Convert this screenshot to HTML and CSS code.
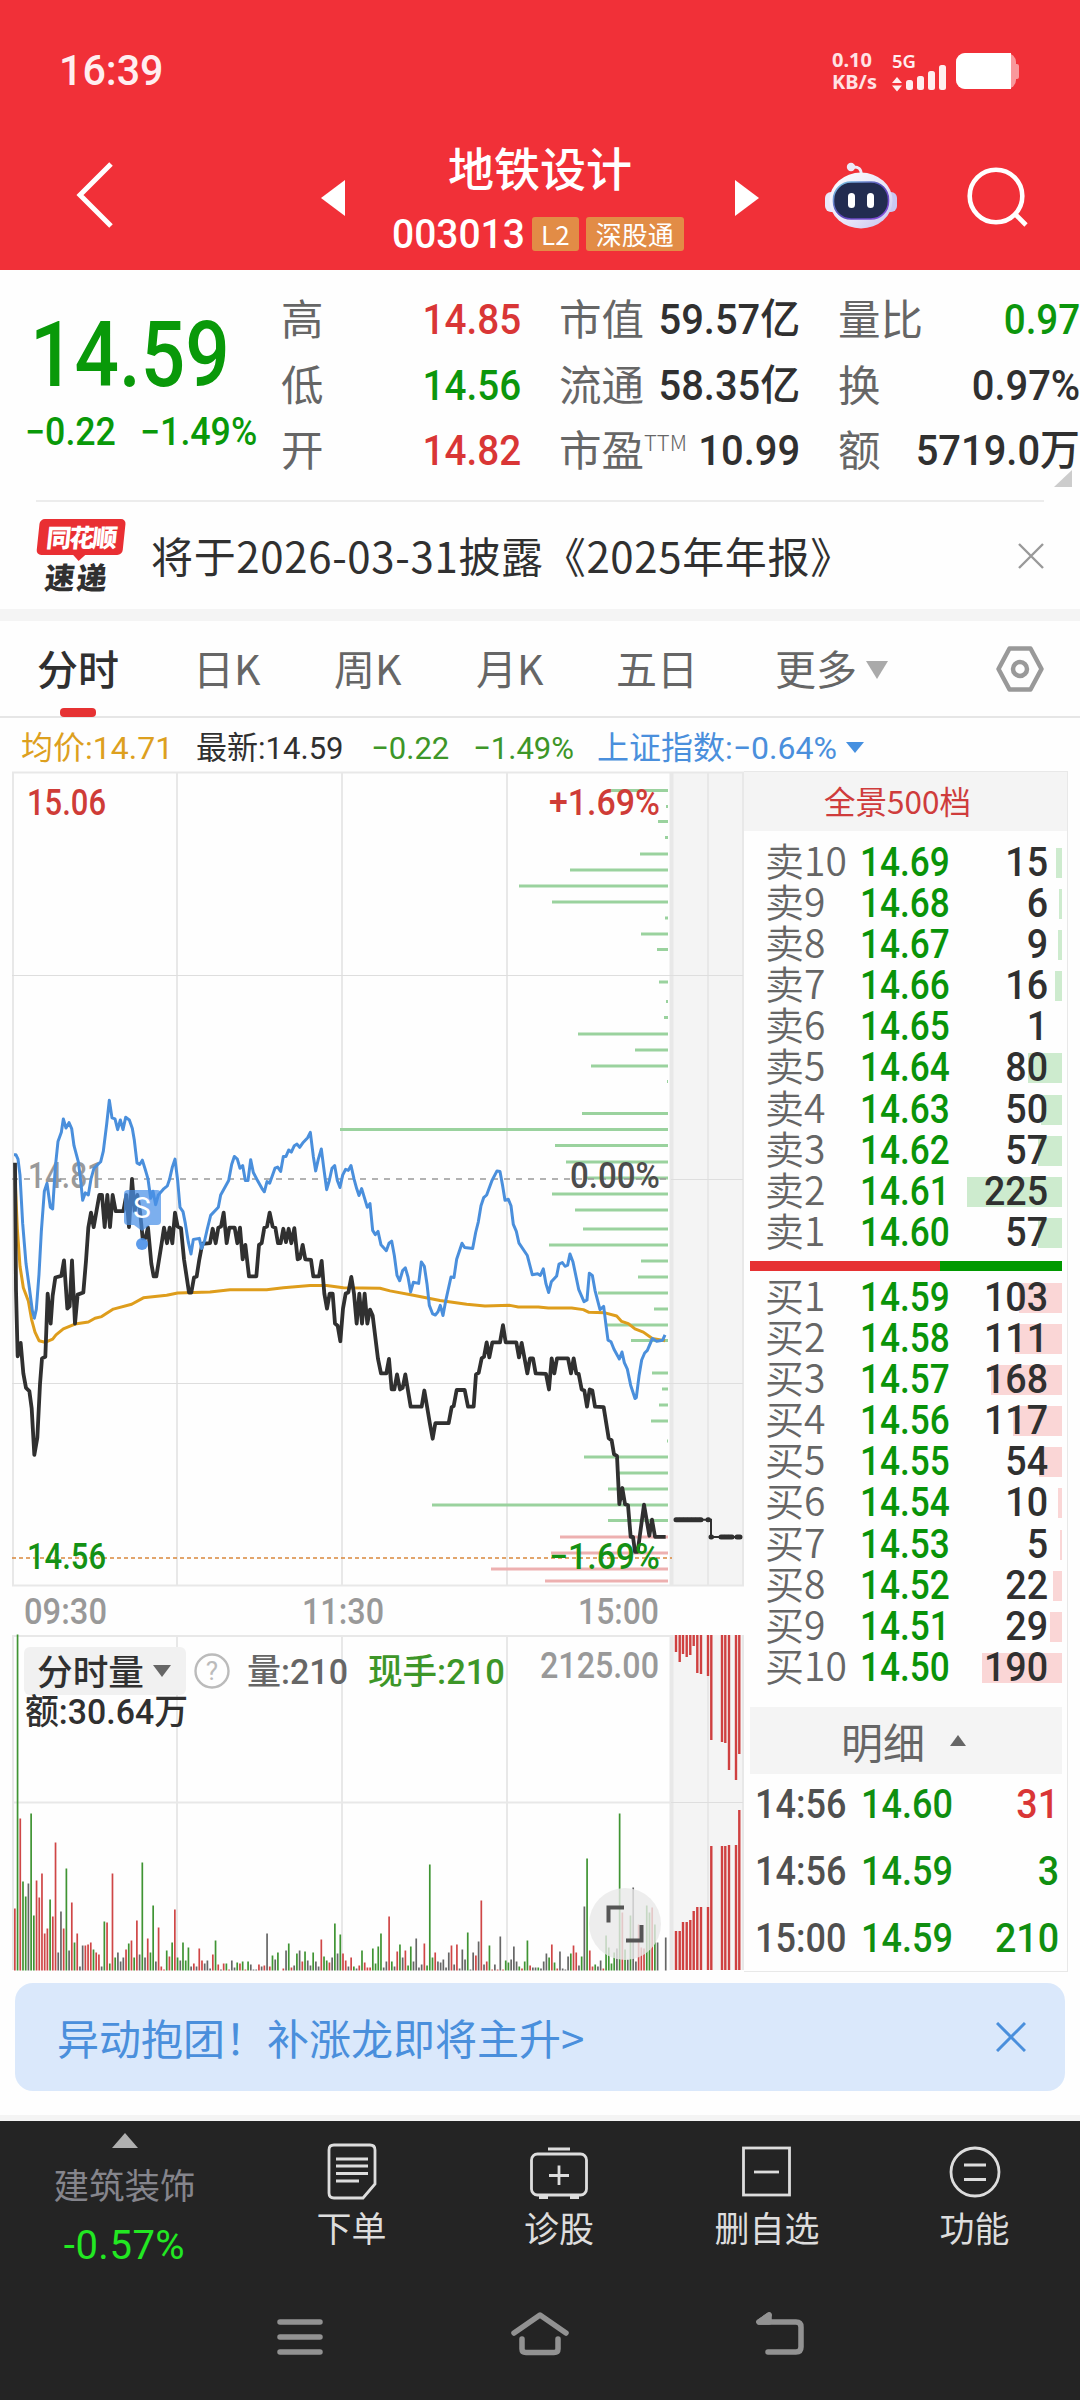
FILE: index.html
```html
<!DOCTYPE html>
<html lang="zh-CN">

<head>
  <meta charset="UTF-8">
  <title>地铁设计 003013</title>
  <meta name="viewport" content="width=device-width, initial-scale=1.0" />
  <link rel="stylesheet" href="styles.css">
</head>

<body>
  <header class="header">
    <div class="status">
      <span class="clock">16:39</span>
      <div class="status-right">
        <div class="speed"><span>0.10</span><span>KB/s</span></div>
        <svg class="signal" width="56" height="40" viewBox="0 0 56 40" fill="#ffeef0">
          <text x="0" y="17" class="net" textLength="24" lengthAdjust="spacingAndGlyphs">5G</text>
          <path d="M0 32l5-6 5 6zM0 34.500l5 6 5-6z" />
          <rect x="14" y="29" width="7" height="10" rx="2.500" />
          <rect x="25" y="25" width="7" height="14" rx="2.500" />
          <rect x="36" y="20" width="7" height="19" rx="2.500" />
          <rect x="47" y="14" width="7" height="25" rx="2.500" />
        </svg>
        <svg class="battery" width="63" height="36" viewBox="0 0 63 36">
          <rect x="0" y="0" width="60" height="36" rx="9" fill="#f9989c" />
          <rect x="58" y="11" width="5" height="15" rx="2" fill="#f9989c" />
          <path d="M9 0H55V36H9a9 9 0 0 1-9-9V9a9 9 0 0 1 9-9z" fill="#fff" />
        </svg>
      </div>
    </div>

    <div class="title-bar">
      <svg class="back" width="42" height="70" viewBox="0 0 42 70">
        <path d="M38 4L7 35L38 66" fill="none" stroke="#fff" stroke-width="5" />
      </svg>
      <svg class="prev" width="24" height="36" viewBox="0 0 24 36"><path d="M24 0V36L0 18z" fill="#fff" /></svg>
      <div class="stock">
        <h1>地铁设计</h1>
        <div class="stock-code">
          <span class="code">003013</span>
          <span class="badge">L2</span>
          <span class="badge wide">深股通</span>
        </div>
      </div>
      <svg class="next" width="24" height="36" viewBox="0 0 24 36"><path d="M0 0V36L24 18z" fill="#fff" /></svg>
      <svg class="robot" width="72" height="68" viewBox="0 0 72 68">
        <defs>
          <linearGradient id="shell" x1="0" y1="0" x2="1" y2="1">
            <stop offset="0" stop-color="#ffffff" />
            <stop offset="0.600" stop-color="#e6e4f8" />
            <stop offset="1" stop-color="#c3c0ee" />
          </linearGradient>
          <linearGradient id="rim" x1="0" y1="0" x2="1" y2="1">
            <stop offset="0" stop-color="#7fd4e8" />
            <stop offset="0.500" stop-color="#5a48b8" />
            <stop offset="1" stop-color="#8b4fe0" />
          </linearGradient>
        </defs>
        <path d="M27 5Q37 4 36 13" fill="none" stroke="#eeeafa" stroke-width="3" />
        <circle cx="26" cy="5" r="4.200" fill="#ece9f8" />
        <rect x="0" y="30" width="14" height="20" rx="6" fill="#eae8fa" />
        <rect x="58" y="30" width="14" height="20" rx="6" fill="#c9c7f2" />
        <ellipse cx="36" cy="38.500" rx="31.500" ry="28" fill="url(#shell)" />
        <rect x="8.500" y="20" width="55" height="37" rx="17.500" fill="#222c50" stroke="url(#rim)" stroke-width="1.600" />
        <rect x="23" y="31" width="7" height="15" rx="3.500" fill="#fff" />
        <rect x="42" y="31" width="7" height="15" rx="3.500" fill="#fff" />
      </svg>
      <svg class="search" width="62" height="62" viewBox="0 0 62 62" fill="none" stroke="#fff" stroke-width="4.600">
        <circle cx="29" cy="30" r="26.300" />
        <path d="M48 48L59 59" />
      </svg>
    </div>
  </header>

  <section class="quote">
    <div class="price">
      <div class="last"><span>14.59</span></div>
      <div class="change"><span>−0.22</span><span>−1.49%</span></div>
    </div>
    <dl class="stats">
      <dt>高</dt><dd class="up">14.85</dd>
      <dt>市值</dt><dd>59.57亿</dd>
      <dt>量比</dt><dd class="down">0.97</dd>
      <dt>低</dt><dd class="down">14.56</dd>
      <dt>流通</dt><dd>58.35亿</dd>
      <dt>换</dt><dd>0.97%</dd>
      <dt>开</dt><dd class="up">14.82</dd>
      <dt>市盈<sup>TTM</sup></dt><dd>10.99</dd>
      <dt>额</dt><dd>5719.0万</dd>
    </dl>
    <div class="corner"></div>
  </section>

  <section class="news">
    <div class="logo">
      <span class="logo-top">同花顺</span>
      <span class="logo-bottom">速递</span>
    </div>
    <p>将于2026-03-31披露《2025年年报》</p>
    <svg width="26" height="26" viewBox="0 0 26 26"><path d="M1 1L25 25M25 1L1 25" stroke="#999" stroke-width="2.400" /></svg>
  </section>

  <nav class="tabs">
    <a class="active">分时</a>
    <a>日K</a>
    <a>周K</a>
    <a>月K</a>
    <a>五日</a>
    <a>更多<i class="caret"></i></a>
    <svg width="50" height="48" viewBox="0 0 50 48" fill="none" stroke="#999" stroke-width="4.500">
      <path d="M14.500 3.500H35.500L46.500 24L35.500 44.500H14.500L3.500 24z" stroke-linejoin="round" />
      <circle cx="25" cy="24" r="7" />
    </svg>
  </nav>

  <div class="summary">
    <span class="avg">均价:14.71</span>
    <span class="now">最新:14.59</span>
    <span class="fall">−0.22</span>
    <span class="fall">−1.49%</span>
    <span class="index">上证指数:−0.64%<i class="caret"></i></span>
  </div>

  <main class="board">
    <div class="charts">
      <svg class="chart" width="732" height="1202" viewBox="12 770 732 1202">
        <!-- call auction strip -->
        <rect x="671" y="772" width="72" height="814" fill="#f4f4f4" />
        <rect x="671" y="1635" width="72" height="335" fill="#f4f4f4" />

        <!-- grid -->
        <g stroke="#e8e8e8" stroke-width="2" fill="none">
          <path d="M12 772.500H744M12 1585.500H744M12 1636H671M12 1802.500H671" />
          <path d="M13 772V1586M177 772V1586M342 772V1586M507 772V1586M708 772V1586M743 772V1586" />
          <path d="M13 1635V1970M177 1635V1970M342 1635V1970M507 1635V1970M708 1635V1970M743 1635V1970" />
          <path d="M671.500 772V1586M671.500 1635V1970" stroke-width="4" />
          <path d="M12 975.500H743M12 1383.500H743M671 1179.500H743M671 1802.500H743" stroke-width="1" stroke="#dedede" />
        </g>

        <!-- orders by price level -->
        <path class="asks" d="M608 790.500H668M666 806.500H668M658 821.500H668M665 837.500H668M640 854H668M570 870H668M519 886H668M552 902H668M665 918H668M641 934H668M657 949.500H668M659 982H668M666 1001.500H668M664 1017.500H668M578 1034H668M635 1050H668M591 1066H668M667 1081.500H668M582 1113.500H668M340 1129.500H668M555 1145.500H668M566 1162H668M585 1178H668M552 1194H668M575 1210H668M583 1229H668M549 1245H668M641 1261H668M638 1277H668M598 1293H668M654 1309H668M607 1325H668M631 1340.500H668M652 1373H668M662 1389H668M659 1405H668M651 1421H668M667 1441H668M584 1457H668M619 1473H668M608 1489H668M432 1505H668M608 1520.500H668" />
        <path class="bids" d="M560 1537H668M551 1553H668M491 1569H668M545 1581H668" />

        <path d="M12 1179H668" stroke="#999" stroke-width="1.600" stroke-dasharray="6 6" />
        <path d="M12 1558H672" stroke="#d9883c" stroke-width="1.600" stroke-dasharray="4 3" />

        <text class="axis" x="28" y="1188" fill="#999" textLength="76" lengthAdjust="spacingAndGlyphs">14.81</text>

        <g class="lines" transform="translate(0 760) scale(0.33333 0.53571)">
          <polyline stroke="#de9d1c" points="46,790 52,875 60,945 70,985 85,1010 95,1045 105,1068 117,1084 135,1087 158,1081 168,1073 190,1062 225,1053 265,1049 285,1042 305,1039 340,1025 395,1016 430,1004 500,999 533,995 630,993 690,989 800,989 850,985 930,981 980,981 1030,985 1140,986 1170,991 1240,999 1320,1009 1400,1016 1455,1019 1530,1018 1555,1021 1615,1021 1645,1023 1715,1023 1750,1026 1767,1031 1815,1032 1850,1038 1865,1048 1885,1052 1905,1062 1930,1068 1957,1080 1995,1084" />
          <polyline class="last-line" stroke="#303030" points="45,752 48,990 53,1113 62,1088 70,1145 78,1172 88,1178 95,1210 103,1297 112,1265 120,1165 126,1117 136,1114 143,996 152,1052 158,1000 166,966 184,963 192,934 202,1024 209,1020 216,934 225,1052 233,998 250,994 258,935 265,873 273,845 281,872 298,812 306,812 314,872 322,812 330,872 338,812 347,842 370,842 379,812 387,872 396,782 404,842 412,812 420,842 428,893 436,893 444,873 454,940 461,964 469,964 485,902 492,873 501,902 509,873 517,902 525,845 533,871 543,874 552,932 567,994 574,994 582,966 590,964 598,932 607,903 630,902 638,875 647,902 655,873 663,871 671,845 680,902 688,873 704,873 712,902 720,873 728,932 736,905 747,964 769,964 777,905 785,902 793,873 801,871 809,845 818,871 826,873 834,902 842,902 850,875 858,900 866,875 874,902 883,874 893,932 900,930 908,905 916,932 933,933 940,964 957,964 965,935 973,996 981,1024 989,996 998,996 1005,1052 1013,1056 1021,1085 1029,1024 1037,996 1045,994 1054,965 1062,996 1070,1052 1078,996 1086,1052 1094,996 1102,1052 1110,1026 1118,1037 1134,1118 1143,1145 1159,1145 1167,1118 1175,1175 1183,1175 1191,1147 1200,1175 1208,1172 1216,1147 1232,1207 1265,1207 1273,1177 1282,1210 1290,1240 1298,1267 1306,1238 1346,1238 1355,1208 1361,1206 1370,1176 1394,1176 1404,1207 1421,1207 1428,1147 1436,1144 1445,1117 1452,1114 1460,1087 1468,1115 1477,1087 1500,1087 1509,1055 1517,1087 1549,1087 1557,1115 1565,1088 1582,1145 1590,1117 1599,1117 1607,1145 1638,1146 1647,1175 1655,1117 1663,1145 1671,1117 1704,1117 1713,1145 1721,1117 1729,1145 1736,1146 1745,1175 1753,1177 1761,1207 1769,1175 1777,1177 1785,1207 1811,1208 1826,1266 1835,1270 1842,1296 1851,1299 1858,1389 1867,1359 1875,1389 1884,1391 1892,1450 1899,1450 1905,1478 1913,1478 1932,1390 1948,1448 1956,1418 1965,1450 1997,1450" />
          <polyline stroke="#4a8fdc" points="42,737 48,737 54,745 60,775 68,865 78,940 88,985 97,1028 103,1042 109,1025 117,960 124,880 133,805 141,790 151,835 158,838 166,760 174,712 184,695 190,670 198,687 207,677 215,688 222,720 235,750 242,785 248,822 256,808 265,812 273,782 282,762 302,750 310,730 320,680 328,635 336,668 345,670 353,690 361,672 369,690 377,667 388,672 397,688 403,710 411,752 419,755 427,747 436,765 444,782 452,818 459,805 467,830 475,812 492,800 502,795 509,782 517,760 525,745 533,785 540,835 549,843 556,865 565,900 573,922 580,895 598,893 605,912 614,897 622,875 632,850 655,835 662,812 686,785 695,755 703,740 712,745 720,762 728,757 736,785 744,785 752,746 760,770 770,782 786,800 793,806 801,787 809,790 825,762 833,760 842,768 850,740 858,740 866,728 874,732 883,720 891,717 899,723 908,715 923,705 931,695 940,740 947,767 955,745 964,726 972,765 980,802 988,785 996,762 1004,757 1012,785 1020,798 1028,775 1037,764 1045,766 1053,757 1062,782 1070,800 1077,813 1085,800 1102,835 1110,828 1118,878 1126,886 1134,880 1143,905 1159,916 1167,902 1175,898 1183,925 1191,962 1199,972 1208,953 1216,948 1224,965 1232,993 1240,975 1256,977 1264,937 1273,945 1281,978 1288,1018 1298,1034 1306,1036 1314,1030 1321,1018 1329,1037 1337,1010 1353,965 1362,966 1370,932 1386,902 1394,910 1418,912 1427,882 1435,862 1443,832 1451,817 1460,812 1476,785 1491,767 1500,768 1508,795 1515,822 1525,820 1533,832 1540,867 1549,880 1557,902 1582,925 1597,961 1613,959 1621,962 1630,950 1638,978 1646,994 1654,974 1670,963 1677,941 1687,938 1695,945 1703,943 1710,922 1719,937 1736,988 1752,1011 1761,1008 1768,958 1777,962 1785,990 1800,1026 1811,1020 1818,1055 1824,1083 1833,1086 1842,1100 1858,1118 1866,1105 1873,1125 1882,1137 1892,1167 1905,1192 1909,1190 1917,1150 1925,1120 1934,1107 1942,1102 1957,1080 1970,1085 1988,1083 1995,1073" />
        </g>

        <!-- auction price -->
        <path d="M674 1519.800H711V1537H742" fill="none" stroke="#303030" stroke-width="2" />
        <path d="M676 1519.800H701M708 1519.800H708.500M711 1537H711.500M721 1537H733M737 1537H741" stroke="#303030" stroke-width="5" stroke-linecap="round" stroke-dasharray="3 1" />

        <!-- sell marker -->
        <rect x="124" y="1190" width="37" height="35" rx="4" fill="#4a90e8" fill-opacity="0.720" />
        <path d="M134 1225H150L142 1231z" fill="#4a90e8" fill-opacity="0.720" />
        <circle cx="142" cy="1244" r="6" fill="#4a90e8" fill-opacity="0.900" />
        <text class="mark" x="142" y="1218">S</text>

        <text class="axis" x="27" y="815" fill="#cf3c37" textLength="79" lengthAdjust="spacingAndGlyphs">15.06</text>
        <text class="axis" x="549" y="815" fill="#cf3c37" textLength="111" lengthAdjust="spacingAndGlyphs">+1.69%</text>
        <text class="axis" x="570" y="1188" fill="#4c4c4c" textLength="90" lengthAdjust="spacingAndGlyphs">0.00%</text>
        <text class="axis" x="27" y="1569" fill="#149114" textLength="79" lengthAdjust="spacingAndGlyphs">14.56</text>
        <text class="axis" x="549" y="1569" fill="#149114" textLength="111" lengthAdjust="spacingAndGlyphs">−1.69%</text>
        <text class="axis time" x="24" y="1624" textLength="83" lengthAdjust="spacingAndGlyphs">09:30</text>
        <text class="axis time" x="302" y="1624" textLength="82" lengthAdjust="spacingAndGlyphs">11:30</text>
        <text class="axis time" x="578" y="1624" textLength="81" lengthAdjust="spacingAndGlyphs">15:00</text>

        <g id="volume"></g>
        <g id="auction"></g>

        <!-- volume legend -->
        <rect x="24" y="1647" width="162" height="48" rx="6" fill="#f1f1f1" />
        <text class="cn" x="37" y="1685" fill="#303030" textLength="107" lengthAdjust="spacingAndGlyphs">分时量</text>
        <path d="M153 1665H171L162 1677z" fill="#666" />
        <circle cx="212" cy="1671" r="16.500" fill="none" stroke="#bbb" stroke-width="2.400" />
        <text class="help" x="212" y="1680">?</text>
        <text class="cn" x="247" y="1684" fill="#666" textLength="101" lengthAdjust="spacingAndGlyphs">量:210</text>
        <text class="cn" x="368" y="1684" fill="#3d9628" textLength="137" lengthAdjust="spacingAndGlyphs">现手:210</text>
        <text class="axis time" x="540" y="1678" textLength="119" lengthAdjust="spacingAndGlyphs">2125.00</text>
        <text class="cn" x="25" y="1724" fill="#303030" textLength="163" lengthAdjust="spacingAndGlyphs">额:30.64万</text>

        <!-- full screen button -->
        <circle cx="625" cy="1924" r="36" fill="#e9e9e9" fill-opacity="0.800" />
        <path d="M608.500 1922.500V1907.500H624M626 1940.500H641.500V1925" fill="none" stroke="#555" stroke-width="4" />
      </svg>
    </div>

    <aside class="book">
      <div class="book-head">全景500档</div>
      <div class="levels" id="asks"></div>
      <div class="ratio"><i></i></div>
      <div class="levels" id="bids"></div>
      <div class="ticks-head">明细<i></i></div>
      <div class="ticks">
        <div class="tick"><span>14:56</span><b>14.60</b><em class="up">31</em></div>
        <div class="tick"><span>14:56</span><b>14.59</b><em>3</em></div>
        <div class="tick"><span>15:00</span><b>14.59</b><em>210</em></div>
      </div>
    </aside>
  </main>

  <div class="promo">
    <span>异动抱团！补涨龙即将主升&gt;</span>
    <svg width="30" height="30" viewBox="0 0 30 30"><path d="M1 1L29 29M29 1L1 29" stroke="#4a8fdc" stroke-width="3" /></svg>
  </div>

  <footer class="footer">
    <div class="actions">
      <div class="sector">
        <i></i>
        <span>建筑装饰</span>
        <b>-0.57%</b>
      </div>
      <div class="action">
        <svg width="60" height="60" viewBox="0 0 60 60">
          <path d="M12 4H48Q53 4 53 9V43L41 57H12Q7 57 7 52V9Q7 4 12 4z" />
          <path d="M14 18H46M14 25H46M14 32.500H46M14 40H37" />
        </svg>
        <span>下单</span>
      </div>
      <div class="action">
        <svg width="60" height="60" viewBox="0 0 60 60">
          <rect x="2.500" y="13" width="55" height="41" rx="6" />
          <path d="M19 8H41M10 56.500H19M41 56.500H50M30 24.500V44M20 34.500H40" />
        </svg>
        <span>诊股</span>
      </div>
      <div class="action">
        <svg width="60" height="60" viewBox="0 0 60 60">
          <rect x="6.500" y="7" width="46" height="47" />
          <path d="M17 31H42" />
        </svg>
        <span>删自选</span>
      </div>
      <div class="action">
        <svg width="60" height="60" viewBox="0 0 60 60">
          <circle cx="30" cy="31" r="24" />
          <path d="M19 24H41M19 38.500H41" />
        </svg>
        <span>功能</span>
      </div>
    </div>
    <div class="system">
      <svg width="60" height="48" viewBox="0 0 60 48"><path d="M10 12H50M10 27H50M10 42H50" /></svg>
      <svg width="60" height="48" viewBox="0 0 60 48"><path d="M4 23L30 5L56 23M12 29V39Q12 42.500 16 42.500H44Q48 42.500 48 39V29" /></svg>
      <svg width="60" height="48" viewBox="0 0 60 48"><path d="M19 5L9 12H46Q51 12 51 17V37Q51 42 46 42H18" /><path d="M19 5L9 12H19z" fill="#929292" /></svg>
    </div>
  </footer>

  <script>
    const asks = [15, 6, 9, 16, 1, 80, 50, 57, 225, 57];
    const bids = [103, 111, 168, 117, 54, 10, 5, 22, 29, 190];

    // r = up, g = down, k = flat, number = bar height
    const minutes = `r62 g336 r152 g89 g74 k87 g157 g55 r90 r73 r97 r37 r42 g71 r54 r128 k18 k59 r42 g102
      k20 r68 g28 r37 k4 k25 r25 r26 r28 g21 r18 r16 k4 g49 r48 g7 r97 g13 k18 k9
      k13 r21 g27 r30 g13 r50 k16 g108 k13 r32 g18 g65 k9 r43 r4 r1 g20 r14 g28 r61
      g13 k10 g28 g10 g23 k4 r7 k4 r22 r10 k7 k10 k2 r16 g30 r6 k1 r7 g7 r1
      k10 k3 g8 r7 g9 r1 g9 k6 k1 k1 r6 k4 r5 k37 r4 g15 k11 g18 k0 r2
      k20 g27 r3 k5 g17 k20 r9 g19 k10 k5 g18 k9 k4 r31 g14 g10 r8 k13 g47 k17
      g36 r17 r10 k4 r13 g4 k2 r5 g20 r8 r3 r3 g22 g7 g24 g37 k3 k9 r54 g9
      k4 r19 g26 k13 r20 g5 g24 k9 k32 k3 k6 r27 g5 g106 g13 r18 k9 k8 k11 k3
      k18 r25 k6 r26 k2 k21 k11 g38 k1 k18 r15 k29 r70 k6 r9 g25 r1 k6 r1 k34
      r1 g10 g8 k11 k24 k9 g4 r2 g9 g30 r5 k3 k3 g3 k2 k9 k17 g13 r26 g8
      r2 k19 k2 k1 k14 g17 r25 r18 k5 g14 k64 g112 r20 r4 g6 k4 k10 r2 g35 g23
      g7 g18 k22 g157 r58 g21 k11 g55 k83 k9 r46 r23 r22 g65 g58 r63 g46 k28 k0 k0 k33`;

    // x, unmatched volume (from top), matched volume (from bottom)
    const auction = [
      [676, 17, 39], [679.7, 27, 39], [683, 19, 48], [686.7, 22, 48], [690.3, 20, 50],
      [693.7, 11, 59], [697.3, 38, 63], [701, 39, 63], [708, 41, 63], [711.3, 105, 124],
      [722, 107, 124], [725.3, 108, 124], [729, 135, 125], [736, 145, 125], [739.3, 119, 160]
    ];

    function showLevels(id, label, list, firstPrice) {
      const container = document.getElementById(id);
      list.forEach((qty, i) => {
        const level = label === '卖' ? 10 - i : i + 1;
        const price = ((firstPrice - i) / 100).toFixed(2);
        const row = document.createElement('div');
        row.className = 'level';
        row.innerHTML = `
          <span>${label}${level}</span>
          <b>${price}</b>
          <em>${qty}</em>
          <i style="width: ${Math.round(qty * 0.42)}px"></i>
        `;
        container.appendChild(row);
      });
    }

    function drawVolume() {
      const colors = { r: '#cf4646', g: '#3f9433', k: '#666666' };
      let bars = '';
      minutes.trim().split(/\s+/).forEach((item, i) => {
        const h = Number(item.slice(1));
        const x = (14 + i * 2.712).toFixed(2);
        bars += `<rect x="${x}" y="${1970.5 - h}" width="1.7" height="${h}" fill="${colors[item[0]]}" />`;
      });
      document.getElementById('volume').innerHTML = bars;

      bars = '';
      auction.forEach(([x, top, bottom]) => {
        bars += `<rect x="${x - 1.2}" y="1635" width="2.4" height="${top}" />`;
        bars += `<rect x="${x - 1.2}" y="${1970 - bottom}" width="2.4" height="${bottom}" />`;
      });
      document.getElementById('auction').innerHTML = bars;
    }

    showLevels('asks', '卖', asks, 1469);
    showLevels('bids', '买', bids, 1459);
    drawVolume();
  </script>
</body>

</html>
```
FILE: styles.css
```css
* {
  box-sizing: border-box;
}

body {
  margin: 0;
  width: 1080px;
  height: 2400px;
  overflow: hidden;
  background: #fefefe;
  color: #303030;
  font-family: Roboto, "Noto Sans CJK SC", sans-serif;
}

svg {
  display: block;
}

b,
em,
i {
  font-style: normal;
  font-weight: 500;
}

.up {
  color: #d93636;
}

.down {
  color: #0c960c;
}

/* header */
.header {
  height: 270px;
  background: #f13038;
  color: #fff;
}

.status {
  display: flex;
  justify-content: space-between;
  height: 141px;
  padding: 0 61px 0 59px;
}

.clock {
  margin-top: 46px;
  font-size: 42px;
  line-height: 50px;
  font-weight: 500;
  color: #ffeef0;
  transform: scaleX(0.98);
  transform-origin: left;
}

.status-right {
  display: flex;
  padding-top: 51px;
}

.speed {
  display: flex;
  flex-direction: column;
  width: 60px;
  font: 700 20px/22px "Noto Sans", sans-serif;
  color: #ffe2e4;
  margin-top: -2px;
}

.net {
  font: 600 18px "Noto Sans", sans-serif;
}

.signal {
  overflow: visible;
}

.battery {
  margin: 2px 0 0 8px;
}

.title-bar {
  display: grid;
  grid-template-columns: 248px 49px 316px 90px 116px 70px;
  align-items: start;
  padding-left: 73px;
}

.back {
  margin-top: 19px;
}

.prev,
.next {
  margin-top: 39px;
}

.stock {
  text-align: center;
}

h1 {
  margin: 0 0 0 24px;
  font-size: 46px;
  line-height: 58px;
  font-weight: 500;
}

.stock-code {
  display: flex;
  align-items: center;
  height: 36px;
  margin: 17px 0 0 22px;
}

.code {
  width: 144px;
  text-align: left;
  font-size: 41px;
  font-weight: 500;
  line-height: 36px;
  transform: scaleX(0.95);
  transform-origin: left;
}

.badge {
  flex: none;
  width: 47px;
  height: 34px;
  margin-right: 7px;
  border-radius: 3px;
  background: #e28c46;
  font: 400 26px/33px "Noto Sans CJK SC", sans-serif;
}

.badge.wide {
  width: 98px;
}

.next {
  margin-left: 49px;
}

.robot {
  margin: 21px 0 0 49px;
}

.search {
  margin: 25px 0 0 75px;
}

.title-bar .next,
.title-bar .robot,
.title-bar .search {
  justify-self: start;
}

/* quote */
.quote {
  position: relative;
  display: flex;
  height: 230px;
}

.price {
  width: 281px;
  color: #099909;
}

.last {
  height: 104px;
  margin: 33px 0 0 30px;
  font-size: 90px;
  line-height: 106px;
  font-weight: 500;
}

.last span {
  display: inline-block;
  transform: scaleX(0.87);
  transform-origin: left;
}

.change {
  display: grid;
  grid-template-columns: 115px auto;
  padding-left: 25px;
  font-size: 38px;
  line-height: 50px;
  font-weight: 500;
}

.change span {
  transform: scaleX(0.94);
  transform-origin: left;
  white-space: nowrap;
  justify-self: start;
}

.stats {
  display: grid;
  grid-template-columns: 80px 160px 38px 80px 161px 38px 80px 162px;
  grid-auto-rows: 65.5px;
  width: 799px;
  margin: 17px 0 0;
  line-height: 65px;
}

.stats dt {
  margin-top: -3px;
  font-family: "Noto Sans CJK SC", sans-serif;
  font-size: 42.5px;
  color: #666;
  white-space: nowrap;
}

.stats dt:nth-of-type(3n+2) {
  grid-column: 4;
}

.stats dt:nth-of-type(3n) {
  grid-column: 7;
}

.stats dd {
  justify-self: end;
  margin: 0;
  font-size: 42px;
  font-weight: 500;
  white-space: nowrap;
  transform: scaleX(0.95);
  transform-origin: right;
}

.stats .up,
.stats .down {
  transform: scaleX(0.92);
}

.stats sup {
  font-size: 22px;
  line-height: 0;
  font-weight: 300;
}

.corner {
  position: absolute;
  left: 1054px;
  top: 200px;
  border-left: 18px solid transparent;
  border-bottom: 17px solid #ccc;
}

/* news */
.news {
  display: flex;
  align-items: center;
  height: 109px;
  margin: 0 36px;
  border-top: 2px solid #ececec;
}

.logo {
  width: 86px;
  height: 76px;
  margin-top: 2px;
  transform: skewX(-6deg);
  text-align: center;
}

.logo-top {
  display: block;
  height: 36px;
  border-radius: 5px;
  background: #e92f33;
  color: #fff;
  font: 900 25px/35px "Noto Sans CJK SC", sans-serif;
  letter-spacing: -2px;
}

.logo-top::after {
  content: "";
  display: block;
  width: 0;
  margin: 0 auto;
  border: 7px solid transparent;
  border-top-color: #e92f33;
}

.logo-bottom {
  display: block;
  margin-top: 4px;
  color: #303030;
  font: 900 30px/34px "Noto Sans CJK SC", sans-serif;
  letter-spacing: 2px;
}

.news p {
  flex: 1;
  margin: -2px 0 0 29px;
  font: 400 42px/60px "Noto Sans CJK SC", sans-serif;
  letter-spacing: 0.65px;
  white-space: nowrap;
}

/* tabs */
.tabs {
  display: grid;
  grid-template-columns: 156px 141px 142px 140px 159px 220px 50px;
  align-items: center;
  height: 109px;
  padding-left: 37px;
  border-top: 12px solid #f4f4f4;
  border-bottom: 2px solid #e6e6e6;
  font: 400 41px/60px "Noto Sans CJK SC", sans-serif;
  color: #666;
}

.tabs a {
  position: relative;
  margin-top: -4px;
}

.tabs .active {
  color: #303030;
  font-weight: 500;
}

.tabs .active::after {
  content: "";
  position: absolute;
  left: 23px;
  top: 71px;
  width: 36px;
  height: 9px;
  border-radius: 4px;
  background: #e63233;
}

.caret {
  display: inline-block;
  border-left: 11px solid transparent;
  border-right: 11px solid transparent;
  border-top: 18px solid #aaa;
  margin-left: 9px;
  vertical-align: 6px;
}

/* summary */
.summary {
  display: grid;
  grid-template-columns: 175px 175px 102px 124px auto;
  height: 52px;
  padding: 4px 0 0 21px;
  font-size: 32px;
  line-height: 52px;
  white-space: nowrap;
}

.avg {
  color: #dda01e;
}

.fall {
  color: #3d9628;
}

.index {
  color: #4a8fdc;
}

.summary .now,
.summary .fall {
  transform: scaleX(0.97);
  transform-origin: left;
}

.summary .caret {
  border-left-width: 9px;
  border-right-width: 9px;
  border-top: 11px solid #4690e0;
}

/* charts */
.board {
  display: flex;
  height: 1202px;
  padding-left: 12px;
}

.asks {
  stroke: #9ad29e;
  stroke-width: 3;
}

.bids {
  stroke: #edb0b0;
  stroke-width: 3;
}

.lines polyline {
  fill: none;
  stroke-width: 3;
  stroke-linejoin: round;
  vector-effect: non-scaling-stroke;
}

.lines .last-line {
  stroke-width: 3.8;
}

.axis {
  font-size: 36px;
  font-weight: 500;
}

.time {
  fill: #999;
}

.mark {
  font-size: 30px;
  fill: #fff;
  text-anchor: middle;
}

.cn {
  font-size: 35px;
  font-weight: 500;
}

.help {
  font-size: 26px;
  fill: #bbb;
  text-anchor: middle;
}

#auction {
  fill: #cf4040;
}

/* order book */
.book {
  width: 324px;
  margin-top: 1px;
  border: 1px solid #e8e8e8;
  border-left: 0;
}

.book-head {
  height: 59px;
  padding-right: 16px;
  background: #f4f4f4;
  color: #cf3c3c;
  font: 400 31.5px/57px "Noto Sans CJK SC", sans-serif;
  text-align: center;
}

.levels {
  padding: 11px 6px 0 21px;
}

#bids {
  padding-top: 6px;
}

.level {
  position: relative;
  display: grid;
  grid-template-columns: 95px 90px 98px;
  height: 41.1px;
  line-height: 41px;
}

.level span {
  margin-top: -3px;
  color: #666;
  font-family: "Noto Sans CJK SC", sans-serif;
  font-size: 39px;
  font-weight: 350;
  white-space: nowrap;
}

.level b,
.level em {
  position: relative;
  z-index: 1;
  font-size: 40px;
}

.level b {
  color: #099409;
  transform: scaleX(0.88);
  transform-origin: left;
}

.level em {
  text-align: right;
  transform: scaleX(0.94);
  transform-origin: right;
}

.level i {
  position: absolute;
  right: -1px;
  top: 6px;
  height: 30px;
  background: #cdebce;
}

#bids .level i {
  background: #fad6d6;
}

.ratio {
  height: 10px;
  margin: 8px 5px 0 6px;
  background: #009900;
}

.ratio i {
  display: block;
  width: 61%;
  height: 10px;
  background: #e63233;
}

.ticks-head {
  display: flex;
  align-items: center;
  height: 67px;
  margin: 19px 5px 0 6px;
  padding-left: 91px;
  background: #f4f4f4;
  color: #666;
  font: 400 42px/65px "Noto Sans CJK SC", sans-serif;
}

.ticks-head i {
  margin-left: 25px;
  border-left: 8px solid transparent;
  border-right: 8px solid transparent;
  border-bottom: 11px solid #666;
}

.ticks {
  padding: 0 8px 0 11px;
}

.tick {
  display: grid;
  grid-template-columns: 106px 90px 108px;
  height: 67px;
  line-height: 61px;
  font-size: 40px;
  font-weight: 500;
}

.tick span {
  color: #505050;
}

.tick span,
.tick b {
  transform: scaleX(0.9);
  transform-origin: left;
}

.tick b,
.tick em {
  color: #108f10;
}

.tick em {
  text-align: right;
  transform: scaleX(0.94);
  transform-origin: right;
}

.tick .up {
  color: #d93636;
}

/* promo */
.promo {
  display: flex;
  align-items: center;
  justify-content: space-between;
  height: 108px;
  margin: 11px 15px 24px;
  padding: 0 39px 0 42px;
  border-radius: 18px;
  background: #dae8fb;
  color: #4a8fdc;
  font: 400 42px/60px "Noto Sans CJK SC", sans-serif;
}

/* footer */
.footer {
  height: 285px;
  border-top: 6px solid #f4f4f4;
  background: #242424;
}

.actions {
  display: grid;
  grid-template-columns: 248px 207px 208px 208px 207px;
  height: 170px;
}

.sector {
  display: flex;
  flex-direction: column;
  align-items: center;
  padding: 12px 0 0 1px;
}

.sector i {
  border-left: 13px solid transparent;
  border-right: 13px solid transparent;
  border-bottom: 15px solid #b0b0b0;
}

.sector span {
  margin-top: 11px;
  font: 400 35.5px/50px "Noto Sans CJK SC", sans-serif;
  color: #85858c;
}

.sector b {
  margin-top: 12px;
  font-size: 40px;
  line-height: 50px;
  letter-spacing: 0.5px;
  font-weight: 400;
  color: #22e822;
}

.action {
  display: flex;
  flex-direction: column;
  align-items: center;
  padding-top: 20px;
  font: 400 35px/50px "Noto Sans CJK SC", sans-serif;
  color: #ddd;
}

.action svg {
  fill: none;
  stroke: #ddd;
  stroke-width: 2.8;
}

.action span {
  margin-top: 1px;
}

.system {
  display: flex;
  justify-content: center;
  gap: 180px;
  padding-top: 19px;
}

.system svg {
  fill: none;
  stroke: #929292;
  stroke-width: 5.5;
  stroke-linecap: round;
  stroke-linejoin: round;
}
```
